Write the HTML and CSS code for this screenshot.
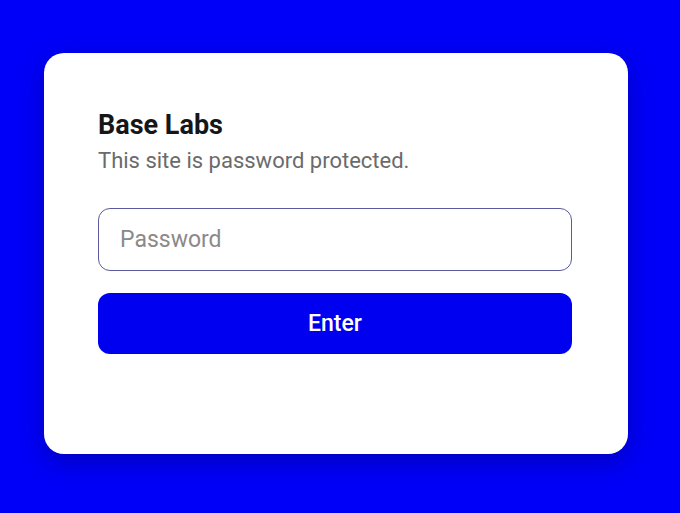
FILE: index.html
```html
<!DOCTYPE html>
<html>
<head>
<meta charset="utf-8">
<link rel="stylesheet" href="styles.css">
</head>
<body>
<div class="page">
  <div class="card">
    <h1 class="title">Base Labs</h1>
    <p class="subtitle">This site is password protected.</p>
    <form class="form">
      <input class="field" type="password" placeholder="Password">
      <button class="btn" type="button">Enter</button>
    </form>
  </div>
</div>
</body>
</html>
```

FILE: styles.css
```css
html, body {
  margin: 0;
  padding: 0;
  height: 100%;
  background: #0000f8;
}
.page {
  padding: 53px 52px 0 44px;
  font-family: Roboto, "Liberation Sans", sans-serif;
}
.card {
  box-sizing: border-box;
  width: 584px;
  height: 401px;
  background: #fff;
  border-radius: 20px;
  padding: 57px 55px 0 54px;
  box-shadow: 0 8px 24px rgba(0, 0, 80, 0.35);
}
.title {
  margin: 0;
  font-size: 27px;
  font-weight: 700;
  line-height: 30px;
  color: #161616;
}
.subtitle {
  margin: 8px 0 0;
  font-size: 22px;
  line-height: 26px;
  color: #6b6b6b;
}
.form {
  margin-top: 34px;
  display: flex;
  flex-direction: column;
  gap: 22px;
}
.field {
  box-sizing: border-box;
  width: 474px;
  height: 63px;
  border: 1.5px solid #5a5a9c;
  border-radius: 12px;
  padding: 0 21px;
  font-family: inherit;
  font-size: 23px;
  color: #333;
  outline: none;
}
.field::placeholder {
  color: #8a8a8a;
}
.btn {
  width: 474px;
  height: 61px;
  border: none;
  border-radius: 12px;
  background: #0000f0;
  color: #fff;
  font-family: inherit;
  font-size: 23px;
  font-weight: 500;
}
```
